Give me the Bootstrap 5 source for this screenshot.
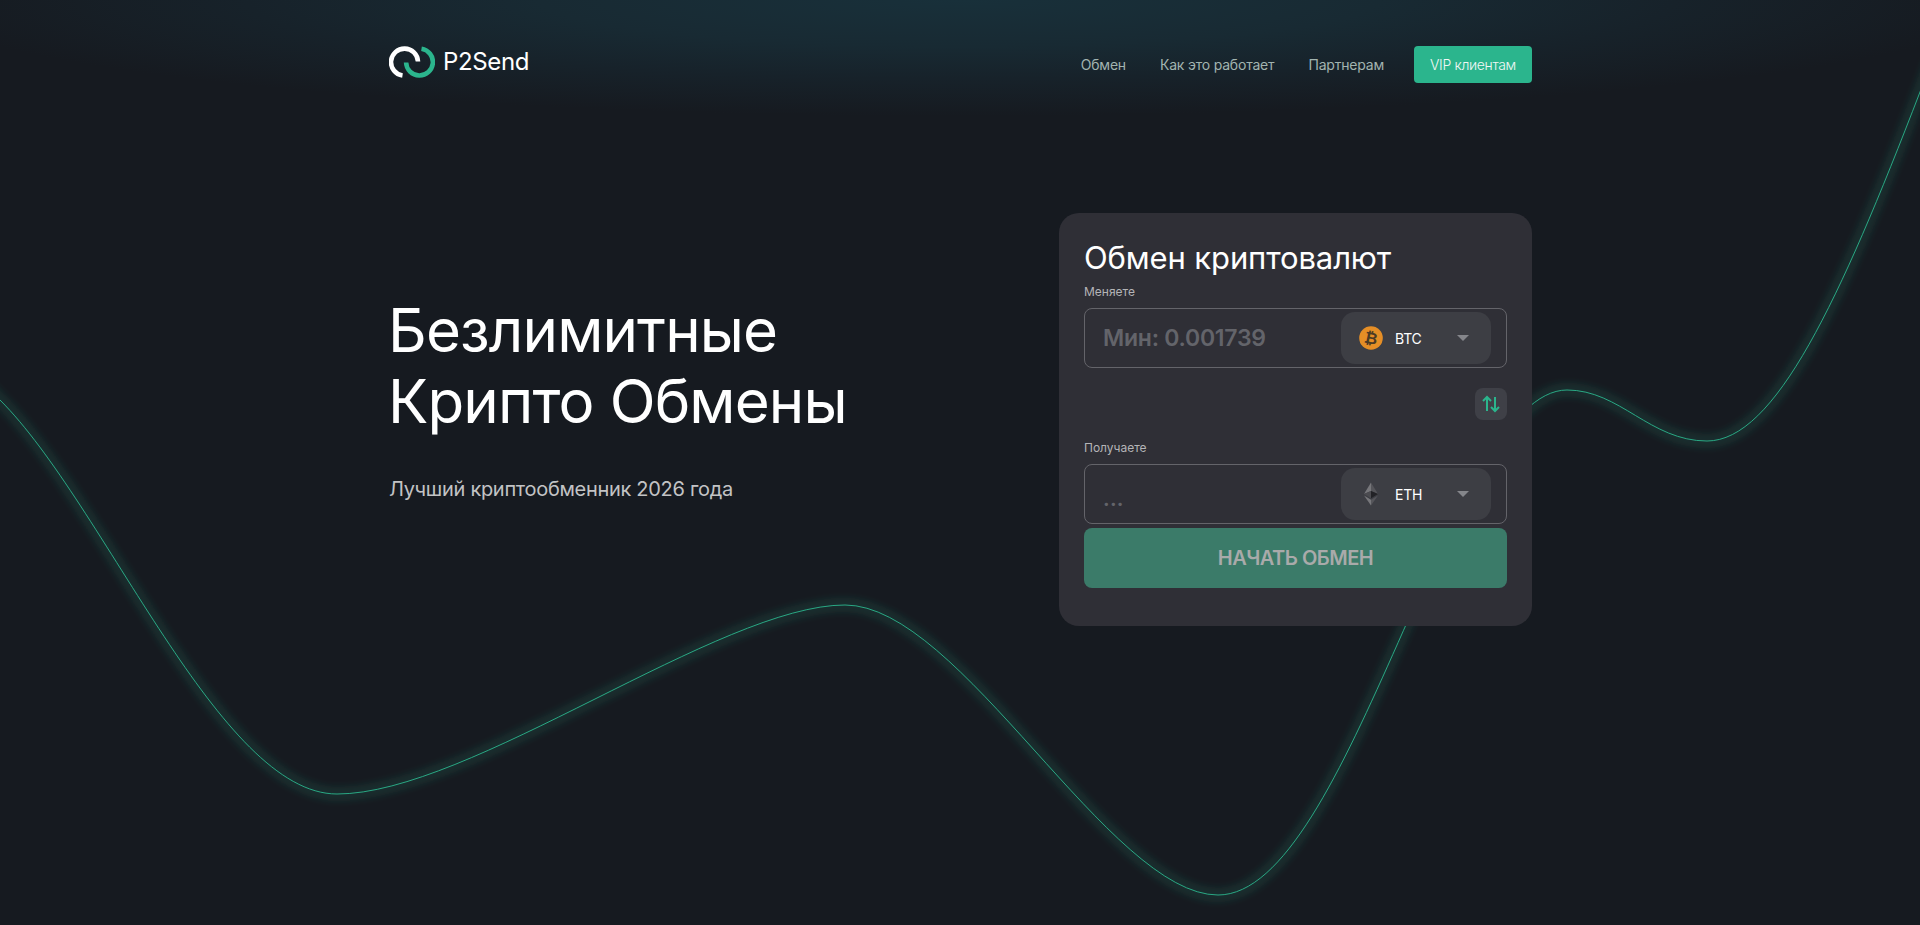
<!DOCTYPE html>
<html lang="ru">
<head>
<meta charset="utf-8">
<title>P2Send</title>
<link href="https://cdn.jsdelivr.net/npm/bootstrap@5.3.0/dist/css/bootstrap.min.css" rel="stylesheet">
<style>
html,body{height:100%}
body{background-color:#161a20;background-image:radial-gradient(ellipse 1050px 116px at 960px 0,#18303a 0%,#182a33 40%,#17222a 68%,rgba(22,26,32,0) 100%);background-repeat:no-repeat;color:#fff;font-family:Inter,"Noto Sans",sans-serif;overflow:hidden;position:relative}
.wave{position:absolute;left:0;top:0;width:1920px;height:925px}
.shell{position:relative;width:1143px;margin-left:389px}
.top-row{height:124px}
.brand-name{font-size:24px;color:#fff;letter-spacing:-.35px;margin-left:8px;line-height:1}
.brand-link{text-decoration:none}
.menu-group{margin-top:5px}
.menu-link{font-size:14px;letter-spacing:-.2px;color:#a2b4b0;text-decoration:none}
.menu-gap{margin-left:34px}
.vip-btn{background:#2bb58d;color:#f1f7f5;font-size:14px;font-weight:300;letter-spacing:-.35px;height:37px;width:118px;border-radius:4px;border:0;padding:0;margin-left:30px;display:flex;align-items:center;justify-content:center;text-decoration:none}
.hero{height:502px;padding-top:89px}
.hero-title{font-size:60px;line-height:71px;font-weight:400;letter-spacing:-.85px;margin:0 0 38px -1px;padding-top:82px}
.hero-sub{font-size:20px;color:#c2c3c5;letter-spacing:-.3px;line-height:28px;margin:0}
.swap-card{width:473px;height:413px;background:#2f2f36;border-radius:20px;padding:25px}
.swap-title{font-size:31px;font-weight:400;line-height:40px;letter-spacing:-.12px;margin:0 0 6px;height:40px}
.field-label{font-size:12px;line-height:15px;color:#b4b4b7;display:block;margin-bottom:9px}
.field-box{height:60px;border:1px solid #64646a;border-radius:8px;padding:3px 15px 3px 18px;display:flex;align-items:center;justify-content:space-between}
.field-value{font-size:23px;font-weight:600;color:#63646a;letter-spacing:-.25px}
.field-dots{font-size:20px;font-weight:700;color:#63646a;letter-spacing:.2px;padding-top:10px;line-height:1}
.coin-pick{width:150px;height:52px;background:#3d3e44;border-radius:14px;display:flex;align-items:center;padding:0 22px 0 18px;font-size:14px;letter-spacing:-.2px}
.coin-name{margin-left:12px;flex-grow:1}
.caret-tri{width:12px;height:6px;fill:#85868b}
.swap-row{height:72px;padding-top:20px;display:flex;justify-content:flex-end;align-items:flex-start}
.swap-icon{width:32px;height:32px;border-radius:8px;background:#3f4047;display:flex;align-items:center;justify-content:center;border:0;padding:0}
.go-btn{width:100%;height:60px;margin-top:4px;background:#3b7b69;color:#a9aaaa;font-size:20px;font-weight:600;letter-spacing:-.5px;border:0;border-radius:8px}
</style>
</head>
<body>
<svg class="wave" viewBox="0 0 1920 925" fill="none" aria-hidden="true">
<defs><filter id="wglow" filterUnits="userSpaceOnUse" x="0" y="0" width="1920" height="925"><feGaussianBlur stdDeviation="3"/></filter></defs>
<path d="M-20 379L0 400C105 505 220 794 337 794C470 794 720 605 845 605C960 605 1110 895 1218 895C1350 895 1450 390 1567 390C1620 390 1650 441 1707 441C1775 441 1840 300 1920 92L1940 40" stroke="#2bb58d" stroke-opacity=".12" stroke-width="15" filter="url(#wglow)"/>
<path d="M-20 379L0 400C105 505 220 794 337 794C470 794 720 605 845 605C960 605 1110 895 1218 895C1350 895 1450 390 1567 390C1620 390 1650 441 1707 441C1775 441 1840 300 1920 92L1940 40" stroke="#2bb58d" stroke-width=".9"/>
</svg>
<div class="shell">
  <nav class="top-row d-flex align-items-center justify-content-between">
    <a class="brand-link d-flex align-items-center" href="#">
      <svg width="46" height="32" viewBox="0 0 46 32" fill="none" stroke-width="4.6">
        <path d="M14 29.5A13.5 13.5 0 1 1 29.5 15.5" stroke="#fff" transform="translate(-.5 0)"/>
        <path d="M32 2.8A13.4 13.4 0 1 1 16.6 16.5" stroke="#2bb58d" transform="translate(.5 0)"/>
      </svg>
      <span class="brand-name">P2Send</span>
    </a>
    <div class="menu-group d-flex align-items-center">
      <a class="menu-link" href="#">Обмен</a>
      <a class="menu-link menu-gap" href="#">Как это работает</a>
      <a class="menu-link menu-gap" href="#">Партнерам</a>
      <a class="vip-btn" href="#">VIP клиентам</a>
    </div>
  </nav>
  <main class="hero d-flex justify-content-between">
    <div>
      <h1 class="hero-title">Безлимитные<br>Крипто Обмены</h1>
      <p class="hero-sub">Лучший криптообменник 2026 года</p>
    </div>
    <section class="swap-card">
      <h2 class="swap-title">Обмен криптовалют</h2>
      <span class="field-label">Меняете</span>
      <div class="field-box">
        <span class="field-value">Мин: 0.001739</span>
        <div class="coin-pick">
          <svg width="24" height="24" viewBox="0 0 24 24"><circle cx="12" cy="12" r="11.8" fill="#e58e26"/><text x="12" y="17.8" text-anchor="middle" font-family="DejaVu Sans,sans-serif" font-weight="700" font-size="16" fill="#4b3a24" transform="rotate(12 12 12)">₿</text></svg>
          <span class="coin-name">BTC</span>
          <svg class="caret-tri" viewBox="0 0 12 6"><path d="M0 0h12L6 6z"/></svg>
        </div>
      </div>
      <div class="swap-row">
        <button class="swap-icon" type="button" aria-label="swap">
          <svg width="20" height="20" viewBox="0 0 20 20" fill="none" stroke="#2bb58d" stroke-width="2"><path d="M6 17V3.5M2 7l4-4 4 4M14 3v13.5M10 13l4 4 4-4"/></svg>
        </button>
      </div>
      <span class="field-label">Получаете</span>
      <div class="field-box">
        <span class="field-dots">...</span>
        <div class="coin-pick">
          <svg width="24" height="24" viewBox="0 0 24 24"><path d="M12 .5 5 12l7-3z" fill="#77777b"/><path d="M12 .5 19 12l-7-3z" fill="#55555a"/><path d="M5 12l7 4.2V9z" fill="#4b4b50"/><path d="M19 12l-7 4.2V9z" fill="#222226"/><path d="M5 13.5l7 10V17.8z" fill="#77777b"/><path d="M19 13.5l-7 10V17.8z" fill="#55555a"/></svg>
          <span class="coin-name">ETH</span>
          <svg class="caret-tri" viewBox="0 0 12 6"><path d="M0 0h12L6 6z"/></svg>
        </div>
      </div>
      <button class="go-btn" type="button">НАЧАТЬ ОБМЕН</button>
    </section>
  </main>
</div>
<script src="https://cdn.jsdelivr.net/npm/bootstrap@5.3.0/dist/js/bootstrap.bundle.min.js"></script>
</body>
</html>
